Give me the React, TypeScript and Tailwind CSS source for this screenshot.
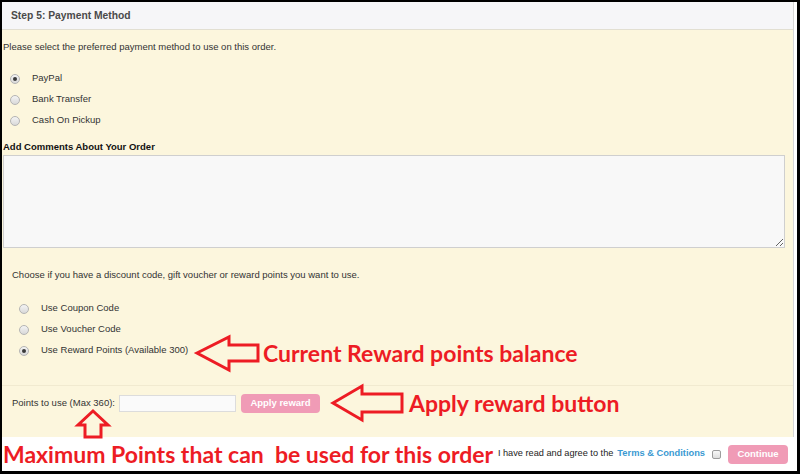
import React from "react";

function Radio({ checked }: { checked?: boolean }) {
  return (
    <span className="w-[10px] h-[10px] rounded-full border border-[#b4b4b4] bg-gradient-to-b from-[#f4f4f4] to-[#d9d9d9] flex items-center justify-center shrink-0">
      {checked ? <span className="w-[4px] h-[4px] rounded-full bg-[#3a3a3a]" /> : null}
    </span>
  );
}

function Row({ label, checked, left }: { label: string; checked?: boolean; left: string }) {
  return (
    <div className={`h-[21px] flex items-center ${left}`}>
      <Radio checked={checked} />
      <span className="ml-[12px] text-[9.5px] text-[#333]">{label}</span>
    </div>
  );
}

export default function App() {
  const red = "#ed1c24";
  return (
    <div className="relative w-[800px] h-[474px] bg-black pt-[2px] pl-[2px] pr-[3px] pb-[3px] font-['Liberation_Sans',Arial,sans-serif]">
      <div className="h-full bg-white flex flex-col">
        <div className="mr-[3px] border-r border-[#d6d6d6] flex-1 flex flex-col">
          <div className="h-[28px] bg-[#f6f6f8] border-b border-[#e2dfd2] pl-[9px] flex items-center text-[10.3px] font-bold text-[#4a4a4a]">
            Step 5: Payment Method
          </div>
          <div className="flex-1 bg-[#fcf6dd] flex flex-col">
            <div className="mt-[11px] pl-[1px] h-[12px] leading-[12px] text-[9.5px] text-[#333]">
              Please select the preferred payment method to use on this order.
            </div>
            <div className="mt-[15px] flex flex-col">
              <Row label="PayPal" checked left="pl-[8px]" />
              <Row label="Bank Transfer" left="pl-[8px]" />
              <Row label="Cash On Pickup" left="pl-[8px]" />
            </div>
            <div className="mt-[10px] pl-[1px] h-[12px] leading-[12px] text-[9.5px] font-bold text-[#111]">
              Add Comments About Your Order
            </div>
            <textarea
              readOnly
              className="mt-[2px] ml-[1px] w-[782px] h-[93px] bg-[#f8f8f8] border border-[#cfcfcf] outline-none"
            />
            <div className="mt-[21px] pl-[10px] h-[12px] leading-[12px] text-[9.5px] text-[#333]">
              Choose if you have a discount code, gift voucher or reward points you want to use.
            </div>
            <div className="mt-[17px] flex flex-col">
              <Row label="Use Coupon Code" left="pl-[17px]" />
              <Row label="Use Voucher Code" left="pl-[17px]" />
              <Row label="Use Reward Points (Available 300)" checked left="pl-[17px]" />
            </div>
            <div className="mt-[24px] border-t border-[#f1ead0]" />
            <div className="mt-[8px] h-[19px] pl-[10px] flex items-center">
              <span className="text-[9.5px] text-[#333]">Points to use (Max 360):</span>
              <span className="ml-[4px] w-[117px] h-[17px] bg-[#fafafa] border border-[#dcdcdc]" />
              <span className="ml-[5px] w-[79px] h-[19px] rounded-[4px] bg-[#f09bb6] text-white font-bold text-[9.5px] flex items-center justify-center">
                Apply reward
              </span>
            </div>
          </div>
        </div>
        <div className="h-[34px] flex items-center pl-[1px] pr-[9px]">
          <span className="font-['Lato',sans-serif] font-bold text-[23px] leading-none whitespace-pre" style={{ color: red }}>
            {"Maximum Points that can  be used for this order"}
          </span>
          <span className="ml-auto text-[9.2px] text-[#222]">I have read and agree to the </span>
          <span className="ml-[4px] text-[9.3px] font-bold text-[#3b9ad2]">Terms &amp; Conditions</span>
          <span className="ml-[7px] w-[9px] h-[9px] rounded-[2px] border border-[#9c9c9c] bg-gradient-to-b from-[#f8f8f8] to-[#dedede]" />
          <span className="ml-[7px] w-[60px] h-[19px] rounded-[4px] bg-[#f09bb6] text-white font-bold text-[9.5px] flex items-center justify-center">
            Continue
          </span>
        </div>
      </div>

      <svg className="absolute inset-0 pointer-events-none" width="800" height="474" viewBox="0 0 800 474">
        <polygon
          points="197,353 229,337 229,345 258,345 258,361 229,361 229,370"
          fill="none"
          stroke={red}
          strokeWidth="3"
          strokeLinejoin="miter"
        />
        <polygon
          points="333,403 362,386 362,394 402,394 402,412 362,412 362,420"
          fill="none"
          stroke={red}
          strokeWidth="3"
          strokeLinejoin="miter"
        />
        <polygon
          points="93,411 108,425 101,425 101,437 85,437 85,425 78,425"
          fill="none"
          stroke={red}
          strokeWidth="3"
          strokeLinejoin="miter"
        />
      </svg>
      <div
        className="absolute left-[263px] top-[340px] font-['Lato',sans-serif] font-bold text-[23px] leading-[27px] whitespace-nowrap"
        style={{ color: red }}
      >
        Current Reward points balance
      </div>
      <div
        className="absolute left-[409px] top-[390px] font-['Lato',sans-serif] font-bold text-[23px] leading-[27px] whitespace-nowrap"
        style={{ color: red }}
      >
        Apply reward button
      </div>
    </div>
  );
}
